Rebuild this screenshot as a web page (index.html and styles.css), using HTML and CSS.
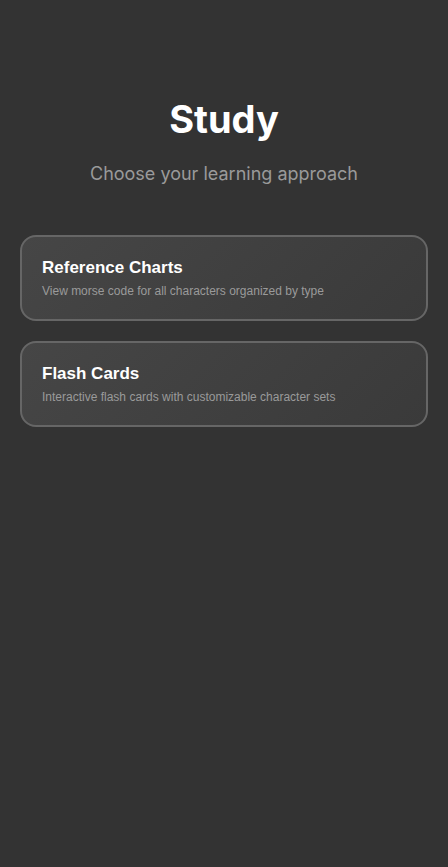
FILE: index.html
```html
<!DOCTYPE html>
<html>
<head>
<meta charset="utf-8">
<link rel="stylesheet" href="styles.css">
</head>
<body>
<main class="page">
  <header class="header">
    <h1 class="title">Study</h1>
    <p class="subtitle">Choose your learning approach</p>
  </header>
  <div class="options">
    <div class="card">
      <h2 class="card-title">Reference Charts</h2>
      <p class="card-desc">View morse code for all characters organized by type</p>
    </div>
    <div class="card">
      <h2 class="card-title">Flash Cards</h2>
      <p class="card-desc">Interactive flash cards with customizable character sets</p>
    </div>
  </div>
</main>
</body>
</html>
```
FILE: styles.css
```css
html, body {
  margin: 0;
  padding: 0;
  background: #333333;
  height: 100%;
}
body {
  font-family: Inter, "Liberation Sans", sans-serif;
}
.page {
  padding: 95px 20px 20px;
}
.header {
  text-align: center;
}
.title {
  margin: 0;
  font-size: 38px;
  font-weight: 700;
  color: #ffffff;
  line-height: 48px;
}
.subtitle {
  margin: 20px 0 0;
  font-size: 18px;
  color: #9a9a9a;
  line-height: 22px;
}
.options {
  margin-top: 50px;
  display: flex;
  flex-direction: column;
  gap: 20px;
}
.card {
  border: 2px solid #666666;
  border-radius: 16px;
  background: linear-gradient(135deg, #464646 0%, #3a3a3a 100%);
  padding: 21px 20px 20px;
  font-family: "Liberation Sans", Arial, sans-serif;
}
.card-title {
  margin: 0;
  font-size: 17px;
  font-weight: 700;
  color: #ffffff;
  line-height: 20px;
}
.card-desc {
  margin: 5px 0 0;
  font-size: 12px;
  color: #9a9a9a;
  line-height: 16px;
}
```
